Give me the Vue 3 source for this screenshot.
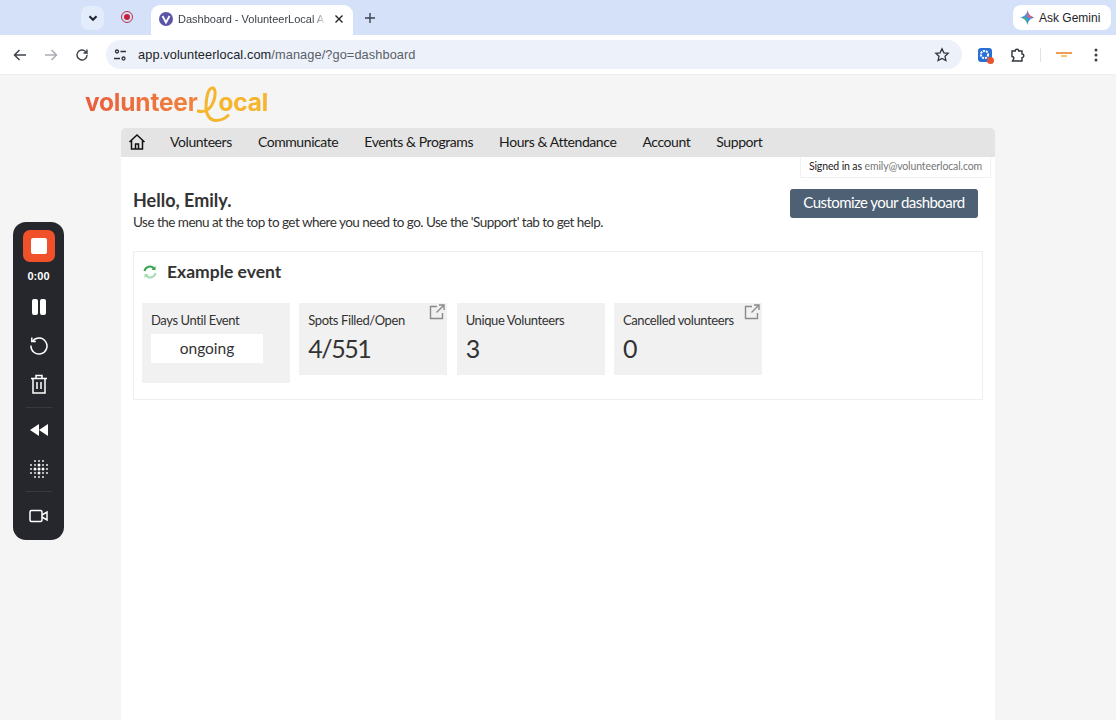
<template>
  <div class="screen">
    <!-- Browser chrome -->
    <div class="tabstrip">
      <div class="tab-search">
        <svg width="12" height="12" viewBox="0 0 12 12"><path d="M2.500 4.200 6 7.800l3.500-3.600" fill="none" stroke="#1f2430" stroke-width="2"/></svg>
      </div>
      <div class="rec-dot"><span></span></div>
      <div class="tab">
        <span class="favicon">
          <svg width="10" height="10" viewBox="0 0 10 10"><path d="M1.500 2 5 8.500 8.500 2" fill="none" stroke="#fff" stroke-width="1.800"/></svg>
        </span>
        <span class="tab-title">Dashboard - VolunteerLocal A</span>
        <svg class="tab-close" width="10" height="10" viewBox="0 0 10 10"><path d="M1.500 1.500l7 7M8.500 1.500l-7 7" stroke="#222" stroke-width="1.400"/></svg>
      </div>
      <svg class="tab-new" width="12" height="12" viewBox="0 0 12 12"><path d="M6 1v10M1 6h10" stroke="#3c4350" stroke-width="1.400"/></svg>
      <div class="gemini">
        <svg width="15" height="15" viewBox="0 0 16 16">
          <path d="M8 0c.6 4.400 3.200 7.200 8 8-4.800.8-7.400 3.600-8 8-.6-4.400-3.200-7.200-8-8 4.800-.8 7.400-3.600 8-8z" fill="#4a8fe8"/>
          <path d="M8 0c.6 4.400 3.200 7.200 8 8H8z" fill="#e0636b"/>
          <path d="M8 16c-.6-4.400-3.200-7.200-8-8h8z" fill="#45ab8a"/>
        </svg>
        <span>Ask Gemini</span>
      </div>
    </div>
    <div class="toolbar">
      <svg class="nav-ico first" width="16" height="16" viewBox="0 0 16 16"><path d="M14 8H3M7.500 3 2.500 8l5 5" fill="none" stroke="#3f444c" stroke-width="1.500"/></svg>
      <svg class="nav-ico" width="16" height="16" viewBox="0 0 16 16"><path d="M2 8h11M8.500 3l5 5-5 5" fill="none" stroke="#a9adb3" stroke-width="1.500"/></svg>
      <svg class="nav-ico" width="16" height="16" viewBox="0 0 16 16"><path d="M13 8a5 5 0 1 1-1.500-3.600L13 6V2.500M13 6H9.500" fill="none" stroke="#3f444c" stroke-width="1.400"/></svg>
      <div class="omnibox">
        <svg width="14" height="14" viewBox="0 0 14 14" fill="none" stroke="#2f343b" stroke-width="1.300">
          <circle cx="4" cy="3.500" r="1.500"/><path d="M7.500 3.500H13M1 10.500h6"/><circle cx="10.500" cy="10.500" r="1.500"/>
        </svg>
        <span class="url"><b>app.volunteerlocal.com</b>/manage/?go=dashboard</span>
        <svg class="star" width="16" height="16" viewBox="0 0 16 16"><path d="M8 1.800l1.900 4 4.300.5-3.200 3 .9 4.300L8 11.400l-3.900 2.200.9-4.300-3.200-3 4.300-.5z" fill="none" stroke="#30353c" stroke-width="1.300"/></svg>
      </div>
      <div class="ext-blue">
        <svg width="15" height="15" viewBox="0 0 15 15"><circle cx="6.500" cy="6.500" r="3.600" fill="none" stroke="#fff" stroke-width="2" stroke-dasharray="2 1"/></svg>
        <span></span>
      </div>
      <svg class="puzzle" width="16" height="16" viewBox="0 0 16 16"><path d="M2 4h3.200a1.800 1.800 0 0 1 3.600 0H12v3a1.800 1.800 0 0 1 0 3.600V14H2.500l.9-1.700a1.700 1.700 0 0 0-1.400-2.800z" fill="none" stroke="#30353c" stroke-width="1.400"/></svg>
      <span class="tb-sep"></span>
      <div class="mini-logo"><span></span><span></span></div>
      <svg class="dots" width="4" height="14" viewBox="0 0 4 14" fill="#3a3f46"><circle cx="2" cy="2" r="1.500"/><circle cx="2" cy="7" r="1.500"/><circle cx="2" cy="12" r="1.500"/></svg>
    </div>

    <!-- Page -->
    <div class="page">
      <div class="logo">
        <span class="logo-a">volunteer</span>
        <svg class="logo-l" width="34" height="38" viewBox="0 0 34 38">
          <path d="M1 26c8 2 13-3 15.500-9.500C19 10 18.500 3 15.500 3 11 3 9 13 9 22c0 8 4 13.500 10 13.500 5 0 9-2 12-5" fill="none" stroke="#f5b52e" stroke-width="3" stroke-linecap="round"/>
        </svg>
        <span class="logo-b">ocal</span>
      </div>

      <div class="main">
        <nav class="menu">
          <svg class="home" width="18" height="18" viewBox="0 0 18 18" fill="none" stroke="#111" stroke-width="1.500">
            <path d="M1.500 9 9 2l7.500 7M3.500 7.500V16h11V7.500M7.500 16v-5h3v5"/>
          </svg>
          <a v-for="item in menu" :key="item">{{ item }}</a>
        </nav>

        <div class="panel">
          <div class="signed-row">
            <div class="signed"><b>Signed in as</b> emily@volunteerlocal.com</div>
          </div>
          <div class="intro">
            <div class="intro-text">
              <h1>Hello, Emily.</h1>
              <p>Use the menu at the top to get where you need to go. Use the 'Support' tab to get help.</p>
            </div>
            <button>Customize your dashboard</button>
          </div>

          <section class="event">
            <h2>
              <svg width="14" height="14" viewBox="0 0 14 14" fill="none" stroke-width="2">
                <path d="M1.500 6A5.500 5.500 0 0 1 11 3.500" stroke="#3aa655"/>
                <path d="M12.500 8A5.500 5.500 0 0 1 3 10.500" stroke="#a8dcb2"/>
                <path d="M12.500 1v4h-4z" fill="#3aa655"/>
                <path d="M1.500 13V9h4z" fill="#a8dcb2"/>
              </svg>
              Example event
            </h2>
            <div class="tiles">
              <div v-for="t in tiles" :key="t.label" class="tile" :class="{ tall: t.pill }">
                <svg v-if="t.link" class="ext" width="16" height="16" viewBox="0 0 16 16" fill="none" stroke="#8a8a8a" stroke-width="1.400">
                  <path d="M8 2.500H1.500v12h12V9M10 1h5v5M15 1 7.500 8.500"/>
                </svg>
                <div class="tile-label">{{ t.label }}</div>
                <div v-if="t.pill" class="pill">{{ t.value }}</div>
                <div v-else class="tile-value">{{ t.value }}</div>
              </div>
            </div>
          </section>
        </div>
      </div>
    </div>

    <!-- Recorder overlay -->
    <div class="recorder">
      <div class="rec-stop"><span></span></div>
      <div class="rec-time">0:00</div>
      <svg class="r-pause" width="16" height="18" viewBox="0 0 16 18" fill="#fff"><rect x="1" y="1" width="6" height="16" rx="2"/><rect x="9" y="1" width="6" height="16" rx="2"/></svg>
      <svg class="r-ico r-redo" width="20" height="20" viewBox="0 0 20 20" fill="none" stroke="#fff" stroke-width="1.500"><path d="M3.800 6A8 8 0 1 1 2 10.500"/><path d="M2.800 2.500v4h4"/></svg>
      <svg class="r-ico r-trash" width="18" height="20" viewBox="0 0 18 20" fill="none" stroke="#fff" stroke-width="1.500"><path d="M1 4.500h16M6 4V1.500h6V4M3 4.500V19h12V4.500M7 8v7M11 8v7"/></svg>
      <span class="r-sep"></span>
      <svg class="r-ico r-back" width="20" height="14" viewBox="0 0 20 14" fill="#fff"><path d="M10 1v12L1 7z"/><path d="M19 1v12l-9-6z"/></svg>
      <svg class="r-ico r-grain" width="18" height="18" viewBox="0 0 18 18" fill="#fff">
        <circle v-for="d in grainDots" :key="d.x + '-' + d.y" :cx="d.x" :cy="d.y" :r="d.r"/>
      </svg>
      <span class="r-sep"></span>
      <svg class="r-ico r-cam" width="19" height="14" viewBox="0 0 19 14" fill="none" stroke="#fff" stroke-width="1.500"><rect x="1" y="1.500" width="12" height="11" rx="1.500"/><path d="M13 6l5-3v8l-5-3"/></svg>
    </div>
  </div>
</template>

<script setup>
const menu = ['Volunteers', 'Communicate', 'Events & Programs', 'Hours & Attendance', 'Account', 'Support']

const tiles = [
  { label: 'Days Until Event', value: 'ongoing', pill: true },
  { label: 'Spots Filled/Open', value: '4/551', link: true },
  { label: 'Unique Volunteers', value: '3' },
  { label: 'Cancelled volunteers', value: '0', link: true }
]

// dot grid for the recorder's effects icon, fading out at the corners
const grainDots = []
for (let x = 1; x < 18; x += 4) {
  for (let y = 1; y < 18; y += 4) {
    const dist = Math.abs(x - 9) + Math.abs(y - 9)
    if (dist <= 12) grainDots.push({ x, y, r: dist <= 4 ? 1.500 : 0.900 })
  }
}
</script>

<style scoped>
.screen {
  position: relative;
  width: 1116px;
  height: 720px;
  overflow: hidden;
  background: #f5f5f5;
  font-family: Lato, sans-serif;
  color: #222;
}

.tabstrip {
  height: 35px;
  background: #d4e1f8;
  display: flex;
  align-items: center;
  padding-left: 81px;
  box-sizing: border-box;
  position: relative;
}

.tab-search {
  width: 23px;
  height: 24px;
  border-radius: 8px;
  background: #e3ecfb;
  display: flex;
  align-items: center;
  justify-content: center;
}

.rec-dot {
  width: 12px;
  height: 12px;
  margin-left: 17px;
  margin-top: -1px;
  border-radius: 50%;
  border: 1.500px solid #b5324a;
  box-sizing: border-box;
  display: flex;
  align-items: center;
  justify-content: center;
}

.rec-dot span {
  width: 6px;
  height: 6px;
  border-radius: 50%;
  background: #c8203a;
}

.tab {
  width: 202px;
  height: 30px;
  margin-left: 18px;
  margin-top: 5px;
  background: #fff;
  border-radius: 9px 9px 0 0;
  display: flex;
  align-items: center;
  padding: 0 9px 0 7px;
  box-sizing: border-box;
}

.favicon {
  width: 14px;
  height: 14px;
  flex: none;
  border-radius: 50%;
  background: #5b57a6;
  display: flex;
  align-items: center;
  justify-content: center;
  margin-left: 1px;
  margin-top: -2px;
}

.tab-title {
  font-family: "Liberation Sans", sans-serif;
  font-size: 11px;
  color: #3a3f47;
  margin-left: 5px;
  height: 16px;
  line-height: 16px;
  white-space: nowrap;
  margin-top: -2px;
  -webkit-mask-image: linear-gradient(to right, #000 92%, rgba(0, 0, 0, 0.15) 100%);
  mask-image: linear-gradient(to right, #000 92%, rgba(0, 0, 0, 0.15) 100%);
}

.tab-close {
  margin-left: auto;
  margin-top: -3px;
}

.tab-new {
  margin-left: 11px;
}

.gemini {
  position: absolute;
  left: 1013px;
  top: 5px;
  width: 98px;
  height: 25px;
  background: #fff;
  border-radius: 8px;
  display: flex;
  align-items: center;
  padding-left: 7px;
  box-sizing: border-box;
  gap: 4px;
  font-family: "Liberation Sans", sans-serif;
  font-size: 12px;
  color: #1f2329;
}

.toolbar {
  height: 40px;
  background: #fff;
  display: flex;
  align-items: center;
  box-sizing: border-box;
  border-bottom: 1px solid #eceef1;
}

.nav-ico {
  margin-left: 15px;
}

.nav-ico.first {
  margin-left: 12px;
}

.omnibox {
  width: 856px;
  height: 29px;
  margin-left: 16px;
  border-radius: 15px;
  background: #edf1f9;
  display: flex;
  align-items: center;
  padding: 0 12px 0 7px;
  box-sizing: border-box;
}

.url {
  margin-left: 11px;
  font-family: "Liberation Sans", sans-serif;
  font-size: 12.750px;
  color: #5a6068;
  letter-spacing: 0.1px;
}

.url b {
  font-weight: 400;
  color: #202327;
}

.star {
  margin-left: auto;
}

.ext-blue {
  position: relative;
  width: 14px;
  height: 14px;
  margin-left: 16px;
  background: #2a6fd6;
  border-radius: 3px;
}

.ext-blue svg {
  position: absolute;
  top: 0;
  left: 0;
}

.ext-blue span {
  position: absolute;
  right: -2px;
  bottom: -2px;
  width: 7px;
  height: 7px;
  background: #e9532d;
  border-radius: 50%;
}

.puzzle {
  margin-left: 18px;
}

.tb-sep {
  width: 1px;
  height: 14px;
  margin-left: 14px;
  background: #dfe2e6;
}

.mini-logo {
  width: 18px;
  margin-left: 14px;
  display: flex;
  flex-direction: column;
  align-items: center;
  gap: 1px;
}

.mini-logo span:first-child {
  width: 16px;
  height: 2px;
  background: #ef9a55;
}

.mini-logo span:last-child {
  width: 6px;
  height: 2px;
  background: #f3c56a;
}

.dots {
  margin-left: 21px;
}

.page {
  height: 645px;
}

.logo {
  height: 53px;
  padding-left: 85px;
  display: flex;
  align-items: flex-start;
  font-family: Inter, sans-serif;
  font-size: 24.500px;
  line-height: 1;
  font-weight: 700;
  letter-spacing: -0.2px;
  box-sizing: border-box;
}

.logo-a {
  margin-top: 15px;
  background: linear-gradient(to right, #e85d3d, #f0843c);
  -webkit-background-clip: text;
  background-clip: text;
  color: transparent;
}

.logo-l {
  margin-left: -1px;
  margin-top: 10px;
  flex: none;
}

.logo-b {
  color: #f5b52e;
  margin-top: 15px;
  margin-left: -12px;
}

.main {
  width: 874px;
  margin-left: 121px;
}

.menu {
  height: 29px;
  background: #e4e4e4;
  border-radius: 5px 5px 0 0;
  display: flex;
  align-items: center;
  padding: 0 0 2px 7px;
  box-sizing: border-box;
  font-size: 14px;
  letter-spacing: -0.42px;
  color: #1a1a1a;
}

.home {
  margin-right: 24px;
}

.menu a {
  margin-right: 26px;
}

.panel {
  height: 563px;
  background: #fff;
  font-size: 14px;
}

.signed-row {
  display: flex;
  justify-content: flex-end;
  padding-right: 4px;
}

.signed {
  width: 191px;
  height: 21px;
  box-sizing: border-box;
  border: 1px solid #f1f1f1;
  border-top: 0;
  font-size: 10.500px;
  letter-spacing: -0.12px;
  line-height: 19px;
  text-align: center;
  color: #777;
}

.signed b {
  font-weight: 400;
  color: #222;
}

.intro {
  display: flex;
  justify-content: space-between;
  align-items: flex-start;
  padding: 11px 17px 0 12px;
}

.intro-text {
  margin-top: -1px;
}

h1 {
  margin: 0;
  font-size: 18px;
  line-height: 24px;
  font-weight: 700;
  color: #333;
}

.intro p {
  margin: 0;
  font-size: 13.500px;
  letter-spacing: -0.52px;
  line-height: 20px;
  color: #333;
}

button {
  width: 188px;
  height: 29px;
  padding: 0 0 3px;
  border: 0;
  border-radius: 3px;
  background: #4e6074;
  color: #fff;
  font-family: inherit;
  font-size: 15px;
  letter-spacing: -0.55px;
}

.event {
  margin: 19px 12px 0;
  height: 149px;
  box-sizing: border-box;
  border: 1px solid #efefef;
  padding: 0 8px;
}

h2 {
  margin: 0;
  height: 51px;
  display: flex;
  align-items: center;
  gap: 10px;
  font-size: 17.500px;
  font-weight: 700;
  color: #333;
  padding-left: 1px;
  padding-bottom: 12px;
  box-sizing: border-box;
}

.tiles {
  display: flex;
  align-items: flex-start;
  gap: 9.330px;
}

.tile {
  position: relative;
  width: 148px;
  height: 72px;
  background: #f1f1f1;
  padding: 8px 9px 0;
  box-sizing: border-box;
}

.tile.tall {
  height: 80px;
}

.tile-label {
  font-size: 13px;
  letter-spacing: -0.4px;
  line-height: 18px;
  color: #333;
  white-space: nowrap;
}

.tile-value {
  font-size: 25px;
  letter-spacing: -1.500px;
  line-height: 34px;
  color: #333;
  margin-top: 2px;
}

.pill {
  width: 112px;
  height: 29px;
  margin-top: 5px;
  background: #fff;
  text-align: center;
  font-size: 15.500px;
  line-height: 29px;
  color: #333;
}

.ext {
  position: absolute;
  top: 1px;
  right: 2px;
}

.recorder {
  position: absolute;
  left: 13px;
  top: 222px;
  width: 51px;
  height: 318px;
  background: #26272c;
  border-radius: 13px;
  display: flex;
  flex-direction: column;
  align-items: center;
  box-sizing: border-box;
  padding-top: 8px;
}

.rec-stop {
  width: 32px;
  height: 32px;
  background: #f0512b;
  border-radius: 7px;
  display: flex;
  align-items: center;
  justify-content: center;
}

.rec-stop span {
  width: 16px;
  height: 16px;
  background: #fff;
  border-radius: 2px;
}

.rec-time {
  margin-top: 7px;
  font-family: "Liberation Sans", sans-serif;
  font-size: 11px;
  line-height: 14px;
  font-weight: 700;
  color: #fff;
}

.r-pause {
  margin-top: 15px;
}

.r-redo {
  margin-top: 19px;
}

.r-trash {
  margin-top: 19px;
}

.r-back {
  margin-top: 15px;
}

.r-grain {
  margin-top: 23px;
}

.r-cam {
  margin-top: 17px;
}

.r-sep {
  width: 26px;
  height: 1px;
  margin-top: 13px;
  background: #38393e;
}
</style>
